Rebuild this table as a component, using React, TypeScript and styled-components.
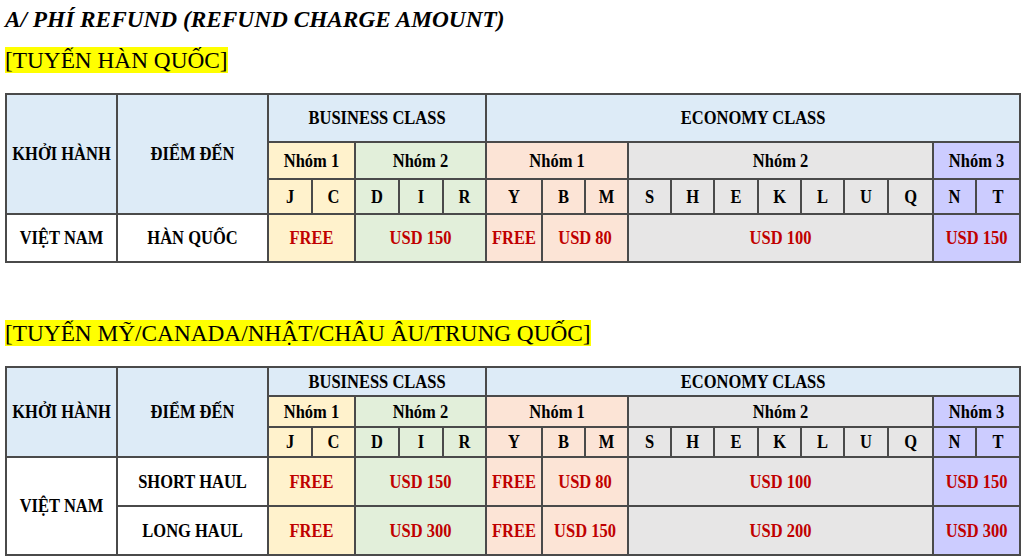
import React from "react";
import styled, { createGlobalStyle } from "styled-components";

const GlobalStyle = createGlobalStyle`
  html, body {
    margin: 0;
    padding: 0;
    background: #ffffff;
  }
  body {
    font-family: "Liberation Serif", "Times New Roman", serif;
    color: #000000;
  }
`;

const Page = styled.div`
  width: 1024px;
  height: 560px;
  overflow: hidden;
  box-sizing: border-box;
  padding: 5px 5px 0 5px;
`;

const Title = styled.h1`
  margin: 0;
  font-size: 23.3px;
  line-height: 28px;
  font-weight: 700;
  font-style: italic;
`;

const RouteLine = styled.div<{ $gap: number }>`
  margin-top: ${(p) => p.$gap}px;
  font-size: 23.3px;
  line-height: 26px;
  & > span {
    background: #ffff00;
  }
`;

const Table = styled.table`
  margin-top: 20px;
  border-collapse: collapse;
  table-layout: fixed;
  width: 1014px;
  font-family: "Liberation Serif", "Times New Roman", serif;
  font-weight: 700;
  font-size: 16.5px;
`;

const Row = styled.tr<{ $h: number }>`
  height: ${(p) => p.$h}px;
`;

const Cell = styled.td<{ $bg: string; $red?: boolean }>`
  border: 2px solid #4a4a4a;
  background: ${(p) => p.$bg};
  color: ${(p) => (p.$red ? "#c00000" : "#000000")};
  text-align: center;
  vertical-align: middle;
  padding: 0;
  white-space: nowrap;
`;

const Label = styled.span`
  display: inline-block;
  transform: scaleY(1.2);
`;

const BLUE = "#ddebf7";
const YELLOW = "#fff2cc";
const GREEN = "#e2efda";
const PEACH = "#fce4d6";
const GRAY = "#e7e6e6";
const LAVENDER = "#ccccff";
const WHITE = "#ffffff";

const widths = [111, 151, 44, 43, 44, 44, 43, 56, 43, 43, 43, 43, 44, 43, 43, 44, 45, 43, 44];

const groups = [
  { name: "Nhóm 1", bg: YELLOW, codes: ["J", "C"] },
  { name: "Nhóm 2", bg: GREEN, codes: ["D", "I", "R"] },
  { name: "Nhóm 1", bg: PEACH, codes: ["Y", "B", "M"] },
  { name: "Nhóm 2", bg: GRAY, codes: ["S", "H", "E", "K", "L", "U", "Q"] },
  { name: "Nhóm 3", bg: LAVENDER, codes: ["N", "T"] },
];

// price cells: [text, colspan, bg]
type Price = [string, number, string];

function prices(a: string, b: string, c: string, d: string, e: string, f: string): Price[] {
  return [
    [a, 2, YELLOW],
    [b, 3, GREEN],
    [c, 1, PEACH],
    [d, 2, PEACH],
    [e, 7, GRAY],
    [f, 2, LAVENDER],
  ];
}

function Header({ heights }: { heights: number[] }) {
  return (
    <>
      <colgroup>
        {widths.map((w, i) => (
          <col key={i} style={{ width: w }} />
        ))}
      </colgroup>
      <thead>
        <Row $h={heights[0]}>
          <Cell $bg={BLUE} rowSpan={3}>
            <Label>KHỞI HÀNH</Label>
          </Cell>
          <Cell $bg={BLUE} rowSpan={3}>
            <Label>ĐIỂM ĐẾN</Label>
          </Cell>
          <Cell $bg={BLUE} colSpan={5}>
            <Label>BUSINESS CLASS</Label>
          </Cell>
          <Cell $bg={BLUE} colSpan={12}>
            <Label>ECONOMY CLASS</Label>
          </Cell>
        </Row>
        <Row $h={heights[1]}>
          {groups.map((g, i) => (
            <Cell key={i} $bg={g.bg} colSpan={g.codes.length}>
              <Label>{g.name}</Label>
            </Cell>
          ))}
        </Row>
        <Row $h={heights[2]}>
          {groups.flatMap((g) =>
            g.codes.map((c) => (
              <Cell key={c} $bg={g.bg}>
                <Label>{c}</Label>
              </Cell>
            ))
          )}
        </Row>
      </thead>
    </>
  );
}

function PriceCells({ items }: { items: Price[] }) {
  return (
    <>
      {items.map(([text, span, bg], i) => (
        <Cell key={i} $bg={bg} colSpan={span} $red>
          <Label>{text}</Label>
        </Cell>
      ))}
    </>
  );
}

export default function App() {
  return (
    <Page>
      <GlobalStyle />
      <Title>A/ PHÍ REFUND (REFUND CHARGE AMOUNT)</Title>
      <RouteLine $gap={14}>
        <span>[TUYẾN HÀN QUỐC]</span>
      </RouteLine>
      <Table>
        <Header heights={[48, 37, 35]} />
        <tbody>
          <Row $h={48}>
            <Cell $bg={WHITE}>
              <Label>VIỆT NAM</Label>
            </Cell>
            <Cell $bg={WHITE}>
              <Label>HÀN QUỐC</Label>
            </Cell>
            <PriceCells items={prices("FREE", "USD 150", "FREE", "USD 80", "USD 100", "USD 150")} />
          </Row>
        </tbody>
      </Table>

      <RouteLine $gap={57}>
        <span>[TUYẾN MỸ/CANADA/NHẬT/CHÂU ÂU/TRUNG QUỐC]</span>
      </RouteLine>
      <Table>
        <Header heights={[29, 31, 30]} />
        <tbody>
          <Row $h={49}>
            <Cell $bg={WHITE} rowSpan={2}>
              <Label>VIỆT NAM</Label>
            </Cell>
            <Cell $bg={WHITE}>
              <Label>SHORT HAUL</Label>
            </Cell>
            <PriceCells items={prices("FREE", "USD 150", "FREE", "USD 80", "USD 100", "USD 150")} />
          </Row>
          <Row $h={49}>
            <Cell $bg={WHITE}>
              <Label>LONG HAUL</Label>
            </Cell>
            <PriceCells items={prices("FREE", "USD 300", "FREE", "USD 150", "USD 200", "USD 300")} />
          </Row>
        </tbody>
      </Table>
    </Page>
  );
}
